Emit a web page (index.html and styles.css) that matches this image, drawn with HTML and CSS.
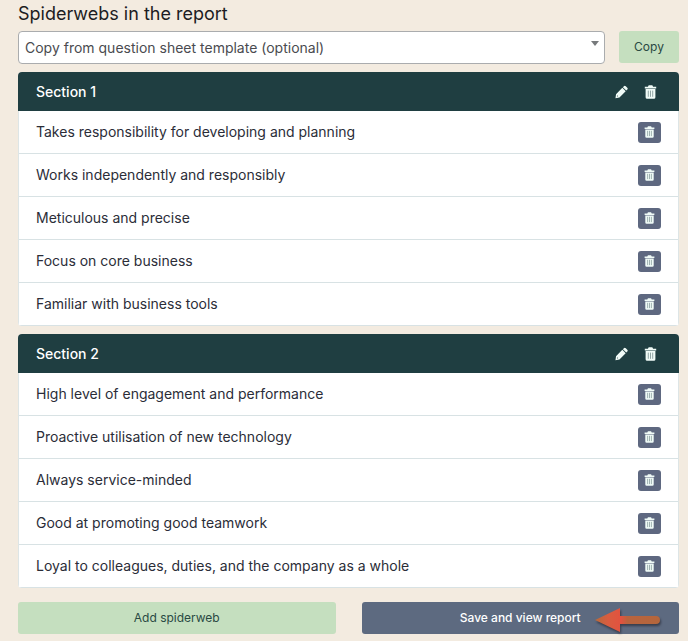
FILE: index.html
```html
<!DOCTYPE html>
<html lang="en">
<head>
<meta charset="utf-8">
<title>Spiderwebs in the report</title>
<link rel="stylesheet" href="styles.css">
</head>
<body>
<svg class="sprite" aria-hidden="true">
  <symbol id="trash" viewBox="0 0 12 14">
    <path fill="currentColor" d="M3.4 1.7 4.2.3h3.6l.8 1.4h3.1v1.7H.3V1.7zM1.1 4h9.8v8.2q0 1.5-1.5 1.5H2.6q-1.5 0-1.5-1.5z"/>
    <path stroke="#1f3e41" stroke-opacity=".5" stroke-width=".9" d="M3.8 5.6v6.2M6 5.6v6.2M8.2 5.6v6.2"/>
  </symbol>
  <symbol id="pencil" viewBox="0 0 14 14">
    <path fill="currentColor" fill-rule="evenodd" d="M9.6.8q1-1 2 0l1.6 1.6q1 1 0 2l-1.1 1.1-3.6-3.6zM7.9 2.5l3.6 3.6-6.7 6.8-4.3.7.6-4.3zM2.3 10.5l-.2 1.4 1.4-.2z"/>
  </symbol>
</svg>
<main class="page">
  <h1 class="title">Spiderwebs in the report</h1>

  <form class="copy-row">
    <div class="picker">
      <select class="picker-select" aria-label="Question sheet template">
        <option>Copy from question sheet template (optional)</option>
      </select>
    </div>
    <button class="btn btn-green" type="button">Copy</button>
  </form>

  <section class="card">
    <header class="card-head">
      <h2 class="card-title">Section 1</h2>
      <button class="icon-btn" type="button" aria-label="Edit section"><svg class="icon"><use href="#pencil"/></svg></button>
      <button class="icon-btn" type="button" aria-label="Delete section"><svg class="icon"><use href="#trash"/></svg></button>
    </header>
    <ul class="list">
      <li class="item"><span>Takes responsibility for developing and planning</span><button class="delete" type="button" aria-label="Delete"><svg class="icon-small"><use href="#trash"/></svg></button></li>
      <li class="item"><span>Works independently and responsibly</span><button class="delete" type="button" aria-label="Delete"><svg class="icon-small"><use href="#trash"/></svg></button></li>
      <li class="item"><span>Meticulous and precise</span><button class="delete" type="button" aria-label="Delete"><svg class="icon-small"><use href="#trash"/></svg></button></li>
      <li class="item"><span>Focus on core business</span><button class="delete" type="button" aria-label="Delete"><svg class="icon-small"><use href="#trash"/></svg></button></li>
      <li class="item"><span>Familiar with business tools</span><button class="delete" type="button" aria-label="Delete"><svg class="icon-small"><use href="#trash"/></svg></button></li>
    </ul>
  </section>

  <section class="card">
    <header class="card-head">
      <h2 class="card-title">Section 2</h2>
      <button class="icon-btn" type="button" aria-label="Edit section"><svg class="icon"><use href="#pencil"/></svg></button>
      <button class="icon-btn" type="button" aria-label="Delete section"><svg class="icon"><use href="#trash"/></svg></button>
    </header>
    <ul class="list">
      <li class="item"><span>High level of engagement and performance</span><button class="delete" type="button" aria-label="Delete"><svg class="icon-small"><use href="#trash"/></svg></button></li>
      <li class="item"><span>Proactive utilisation of new technology</span><button class="delete" type="button" aria-label="Delete"><svg class="icon-small"><use href="#trash"/></svg></button></li>
      <li class="item"><span>Always service-minded</span><button class="delete" type="button" aria-label="Delete"><svg class="icon-small"><use href="#trash"/></svg></button></li>
      <li class="item"><span>Good at promoting good teamwork</span><button class="delete" type="button" aria-label="Delete"><svg class="icon-small"><use href="#trash"/></svg></button></li>
      <li class="item"><span>Loyal to colleagues, duties, and the company as a whole</span><button class="delete" type="button" aria-label="Delete"><svg class="icon-small"><use href="#trash"/></svg></button></li>
    </ul>
  </section>

  <footer class="actions">
    <button class="btn btn-green" type="button">Add spiderweb</button>
    <div class="save">
      <button class="btn btn-slate" type="button">Save and view report</button>
      <svg class="pointer" viewBox="0 0 72 32" aria-hidden="true">
        <defs>
          <linearGradient id="arrow-fill" x1="0" x2="1" y1="0" y2="0">
            <stop offset="0" stop-color="#b56a3c"/>
            <stop offset=".2" stop-color="#d95c40"/>
            <stop offset=".4" stop-color="#e2523f"/>
            <stop offset=".5" stop-color="#b9633e"/>
            <stop offset="1" stop-color="#b4663c"/>
          </linearGradient>
        </defs>
        <path fill="url(#arrow-fill)" d="M2 15 27 3v8h36a4 4 0 0 1 0 8H27v8z"/>
      </svg>
    </div>
  </footer>
</main>
</body>
</html>
```

FILE: styles.css
```css
* {
  box-sizing: border-box;
}

body {
  margin: 0;
  background: #f3ebe0;
  color: #2b2d38;
  font: 14px/20px Inter, "Liberation Sans", sans-serif;
}

button,
select {
  font: inherit;
}

button {
  padding: 0;
  border: 0;
  cursor: pointer;
}

.sprite {
  position: absolute;
  width: 0;
  height: 0;
}

.page {
  padding: 2px 9px 8px 18px;
}

.title {
  margin: 0 0 5px;
  color: #1c1c22;
  font-size: 18px;
  font-weight: 400;
  line-height: 24px;
}

.copy-row {
  display: flex;
  gap: 14px;
  margin-bottom: 8px;
}

.copy-row .btn {
  width: 60px;
  margin-bottom: 1px;
}

.picker {
  position: relative;
  flex: 1;
}

.picker::after {
  content: "";
  position: absolute;
  top: 10px;
  right: 6px;
  border: 4px solid transparent;
  border-top: 5px solid #777a7c;
  border-bottom: 0;
  pointer-events: none;
}

.picker-select {
  display: block;
  width: 100%;
  height: 33px;
  padding: 0 24px 0 6px;
  border: 1px solid #aaacae;
  border-radius: 4px;
  background: #fff;
  color: #4a4b50;
  appearance: none;
}

.btn {
  height: 32px;
  border-radius: 3px;
  font-size: 12px;
}

.btn-green {
  background: #c5dfbf;
  color: #294943;
}

.btn-slate {
  width: 100%;
  background: #5d6a80;
  color: #fff;
  font-weight: 500;
}

.card {
  margin-bottom: 8px;
  overflow: hidden;
  border-radius: 4px;
  background: #fff;
}

.card-head {
  display: flex;
  align-items: center;
  height: 39px;
  padding: 0 16px 0 18px;
  background: #1f3e41;
  color: #fff;
}

.card-title {
  flex: 1;
  margin: 0;
  font-size: 14px;
  font-weight: 500;
}

.icon-btn {
  display: grid;
  place-items: center;
  width: 26px;
  height: 26px;
  margin-left: 3px;
  background: none;
  color: #f0fbf7;
}

.icon {
  width: 13px;
  height: 14px;
}

.icon-small {
  width: 11px;
  height: 12px;
}

.list {
  margin: 0;
  padding: 0;
  border: solid #dde5e6;
  border-width: 0 1px;
  list-style: none;
}

.item {
  display: flex;
  align-items: center;
  justify-content: space-between;
  height: 43px;
  padding: 0 17px;
  border-bottom: 1px solid #d8e2e4;
}

.delete {
  display: grid;
  place-items: center;
  width: 23px;
  height: 21px;
  border-radius: 3px;
  background: #5e6880;
  color: #f0fbf7;
}

.actions {
  display: grid;
  grid-template-columns: 1fr 1fr;
  gap: 26px;
  margin-top: 14px;
}

.save {
  position: relative;
}

.pointer {
  position: absolute;
  top: 3px;
  right: 14px;
  width: 72px;
  height: 32px;
  filter: drop-shadow(1px 2px 1px rgb(30 30 40 / 60%));
}
```
